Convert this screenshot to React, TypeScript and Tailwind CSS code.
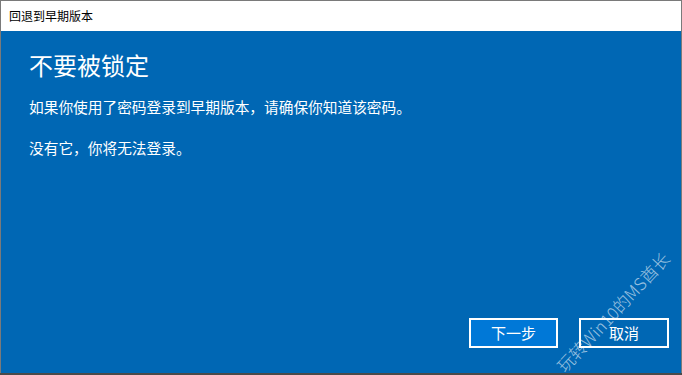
export default function App() {
  const font = { fontFamily: '"Noto Sans CJK SC", "Noto Sans", sans-serif' };
  return (
    <div className="relative w-[682px] h-[375px] overflow-hidden bg-[#3a3a3a]" style={font}>
      <div className="flex flex-col w-[682px] h-[373px] border-x border-t border-[#7a7a7a]">
        {/* title bar */}
        <div className="h-[30px] shrink-0 bg-white flex items-center pl-[8px] text-[12px] text-black">
          回退到早期版本
        </div>

        {/* content */}
        <div className="flex-1 flex flex-col bg-[#0067b4] text-white">
          <div className="pl-[28px] pt-[22px]">
            <h1 className="text-[24px] leading-[24px] font-normal">不要被锁定</h1>
            <p className="mt-[22px] text-[14.7px] leading-[15px]">如果你使用了密码登录到早期版本，请确保你知道该密码。</p>
            <p className="mt-[26px] text-[14.7px] leading-[15px]">没有它，你将无法登录。</p>
          </div>

          <div className="flex-1" />

          <div className="flex justify-end gap-[21px] pr-[12px] pb-[25px]">
            <button className="w-[89px] h-[30px] border-2 border-white bg-[#0078d7] text-[15px] text-white">
              下一步
            </button>
            <button className="w-[90px] h-[30px] border-2 border-white bg-[#0067b4] text-[15px] text-white">
              取消
            </button>
          </div>
        </div>
      </div>

      {/* bottom strip of desktop behind */}
      <div className="h-[2px] bg-[#4a4a4a]" />

      {/* watermark */}
      <div className="absolute left-[533px] top-[302px] w-[160px] text-center rotate-[-47deg] text-[17px] leading-[20px] text-white/60 font-light whitespace-nowrap pointer-events-none">
        玩转Win10的MS酋长
      </div>
    </div>
  );
}
